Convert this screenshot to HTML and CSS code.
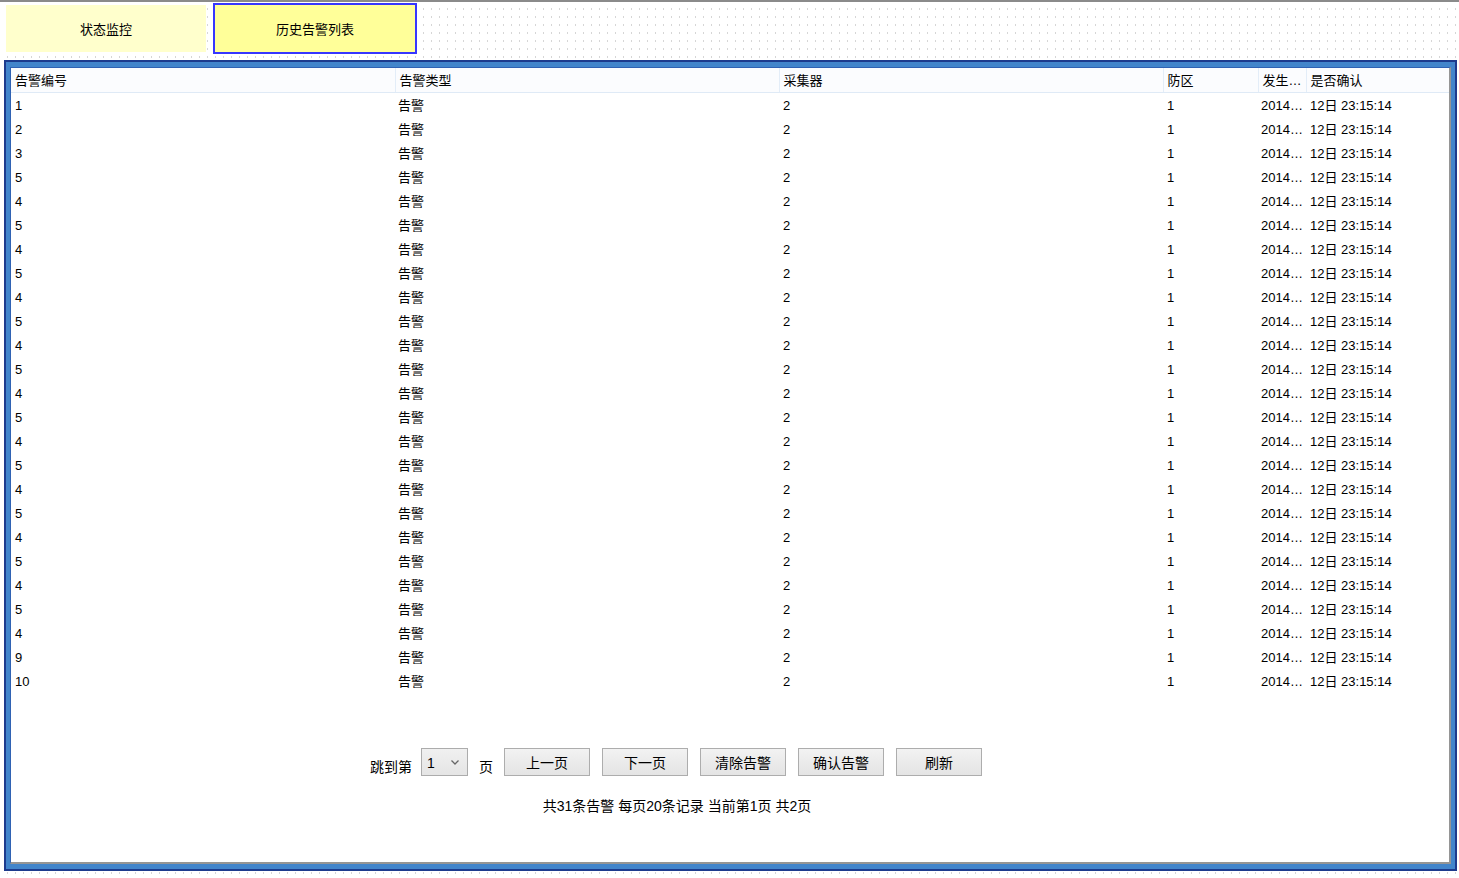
FILE: index.html
```html
<!DOCTYPE html>
<html lang="zh-CN">
<head>
<meta charset="utf-8">
<title>历史告警列表</title>
<link rel="stylesheet" href="styles.css">
</head>
<body>
<div class="tabs">
  <div class="tab">状态监控</div>
  <div class="tab tab-active">历史告警列表</div>
</div>
<div class="frame">
  <div class="inner">
    <table class="grid">
      <colgroup>
        <col class="c-wide"><col class="c-wide"><col class="c-wide"><col class="c-zone"><col class="c-time"><col class="c-ack">
      </colgroup>
      <thead>
        <tr><th>告警编号</th><th>告警类型</th><th>采集器</th><th>防区</th><th>发生…</th><th>是否确认</th></tr>
      </thead>
      <tbody id="rows"></tbody>
    </table>
    <div class="pager">
      <span class="label">跳到第</span>
      <div class="select"><span>1</span><svg width="8" height="5" viewBox="0 0 8 5"><path d="M0.5 0.5 L4 4 L7.5 0.5" fill="none" stroke="#666" stroke-width="1.3"/></svg></div>
      <span class="label">页</span>
      <button class="btn">上一页</button>
      <button class="btn">下一页</button>
      <button class="btn">清除告警</button>
      <button class="btn">确认告警</button>
      <button class="btn">刷新</button>
    </div>
    <div class="summary">共31条告警 每页20条记录 当前第1页 共2页</div>
  </div>
</div>
<script src="script.js"></script>
</body>
</html>
```
FILE: script.js
```js
var ids = [1,2,3,5,4,5,4,5,4,5,4,5,4,5,4,5,4,5,4,5,4,5,4,9,10];
var tb = document.getElementById('rows');
var html = '';
for (var i = 0; i < ids.length; i++) {
  html += '<tr><td>' + ids[i] + '</td><td>告警</td><td>2</td><td>1</td><td>2014…</td><td>12日 23:15:14</td></tr>';
}
tb.innerHTML = html;
```
FILE: styles.css
```css
html, body {
  margin: 0;
  padding: 0;
}
body {
  font-family: "Liberation Sans", "Noto Sans CJK SC", sans-serif;
  color: #000;
  background-color: #fff;
  background-image:
    linear-gradient(to bottom, #fff 6px, transparent 6px),
    linear-gradient(to right, #d6d6d6 1px, transparent 1px);
  background-size: 8px 8px, 8px 8px;
  background-position: 7px 2px, 7px 2px;
  border-top: 2px solid #8a8a8a;
  height: 876px;
}
.tabs {
  display: flex;
  align-items: center;
  height: 51px;
  padding: 1px 0 0 6px;
  gap: 7px;
}
.tab {
  width: 200px;
  height: 47px;
  background: #ffffcc;
  display: flex;
  align-items: center;
  justify-content: center;
  font-size: 13px;
}
.tab-active {
  width: 200px;
  height: 47px;
  background: #ffff99;
  border: 2px solid #3636ff;
}
.frame {
  margin: 6px 0 0 4px;
  width: 1441px;
  height: 797px;
  border: 2px solid #1d3b8d;
  padding: 5px 4px 5px 4px;
  background: #4285cb;
}
.inner {
  width: 1438px;
  height: 794px;
  background: #fff;
  border-top: 1px solid #2f62b3;
  border-left: 1px solid #2f62b3;
  border-right: 2px solid #959595;
  border-bottom: 2px solid #959595;
}
.grid {
  border-collapse: collapse;
  table-layout: fixed;
  width: 1438px;
  font-size: 13px;
}
.c-wide { width: 384px; }
.c-zone { width: 95px; }
.c-time { width: 48px; }
.c-ack { width: 143px; }
.grid th {
  font-weight: normal;
  text-align: left;
  height: 22px;
  line-height: 22px;
  padding: 2px 0 0 4px;
  background: #fbfcfe;
  border-bottom: 1px solid #dfeaf6;
  border-left: 1px solid #e3edf8;
  white-space: nowrap;
}
.grid th:first-child { border-left: none; }
.grid td {
  height: 22px;
  line-height: 22px;
  padding: 2px 0 0 4px;
  white-space: nowrap;
}
.grid td:nth-child(2) { padding-left: 3px; }
.grid td:nth-child(5) { padding-left: 3px; }
.pager {
  display: flex;
  align-items: center;
  justify-content: center;
  margin-top: 55px;
  padding-right: 108px;
  height: 28px;
  font-size: 14px;
}
.label {
  align-self: flex-end;
  line-height: 20px;
  margin-bottom: -1px;
}
.select {
  margin: 0 11px 0 9px;
  border: 1px solid #acacac;
  background: linear-gradient(#f0f0f0, #e5e5e5);
  display: flex;
  align-items: center;
  justify-content: space-between;
  padding: 0 8px 0 5px;
  box-sizing: border-box;
  width: 47px;
  height: 28px;
  font-size: 14px;
}
.select span { margin-top: 1px; }
.btn {
  width: 86px;
  height: 28px;
  margin-left: 12px;
  border: 1px solid #adadad;
  background: linear-gradient(#f2f2f2, #e4e4e4);
  font-family: "Liberation Sans", "Noto Sans CJK SC", sans-serif;
  font-size: 14px;
  color: #000;
  padding: 0;
}
.label + .btn { margin-left: 11px; }
.summary {
  text-align: center;
  padding-right: 106px;
  margin-top: 20px;
  line-height: 20px;
  font-size: 14px;
}
```
